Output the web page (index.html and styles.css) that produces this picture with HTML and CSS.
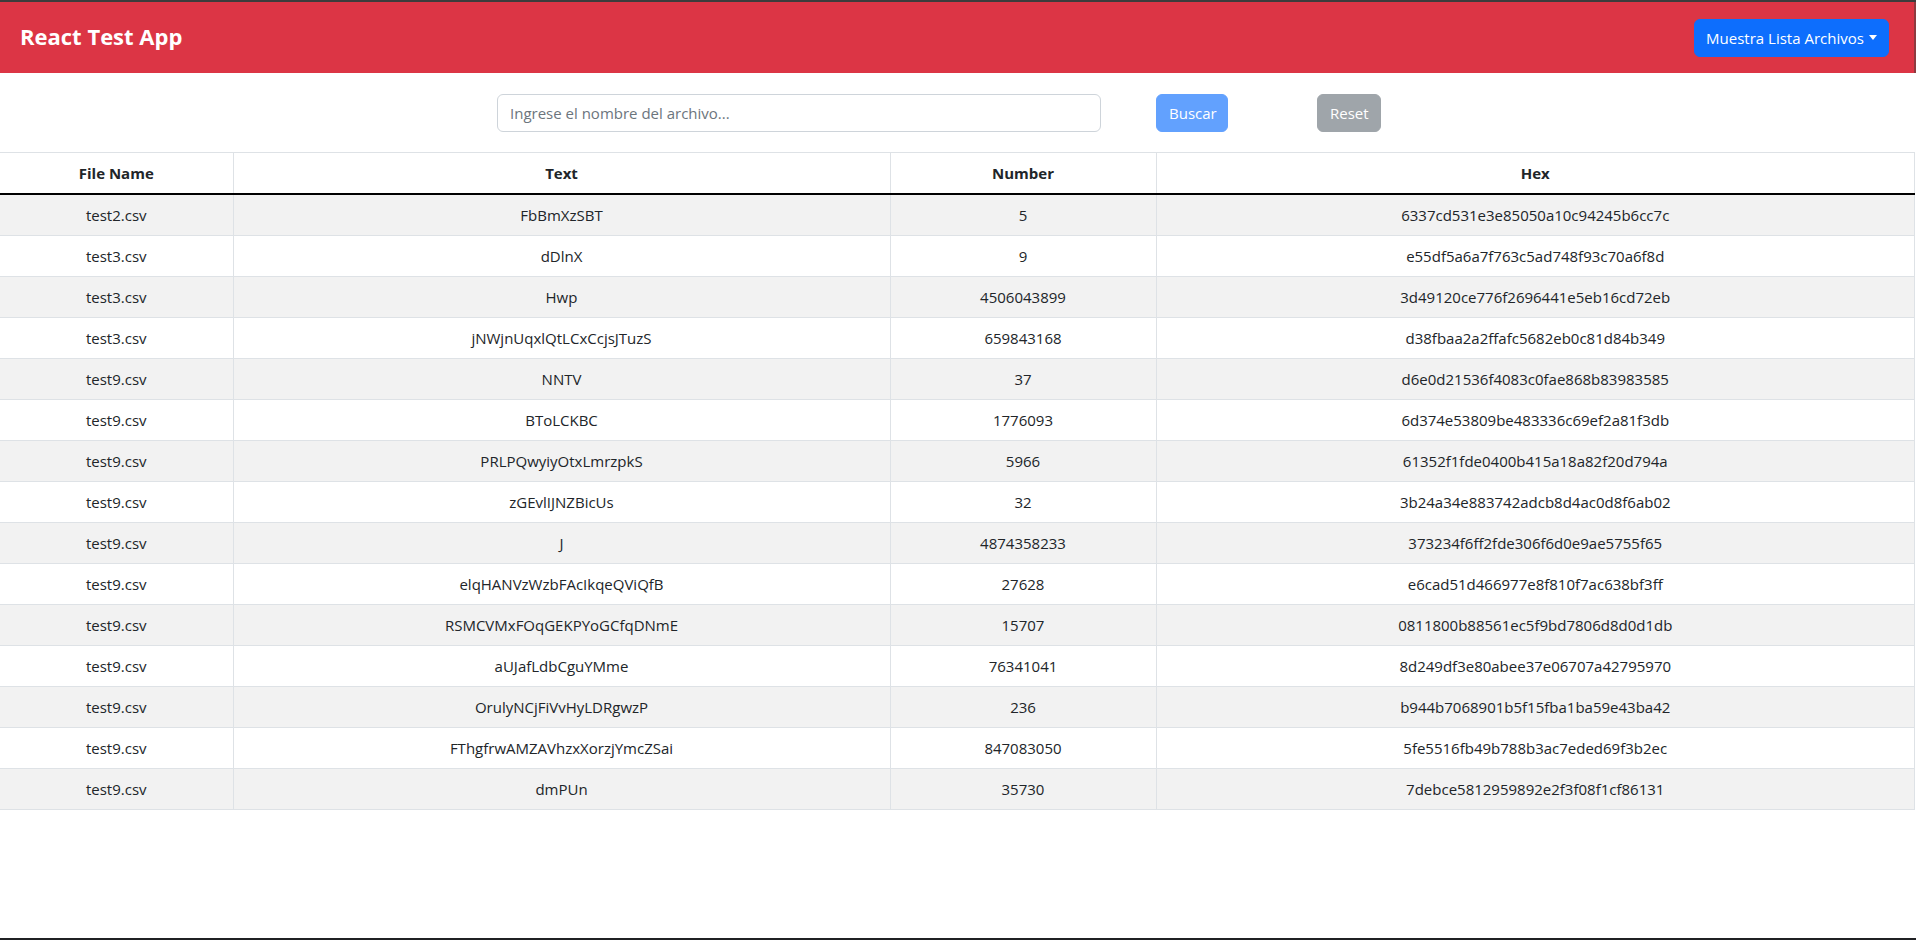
FILE: index.html
```html
<!DOCTYPE html>
<html lang="es">
<head>
<meta charset="utf-8">
<title>React Test App</title>
<link rel="stylesheet" href="styles.css">
</head>
<body>
<div class="window">
  <nav class="navbar">
    <span class="brand">React Test App</span>
    <button class="btn btn-primary dropdown-toggle" type="button">Muestra Lista Archivos</button>
  </nav>
  <div class="search">
    <input class="search-input" type="text" placeholder="Ingrese el nombre del archivo...">
    <button class="btn btn-buscar" type="button" disabled>Buscar</button>
    <button class="btn btn-reset" type="button" disabled>Reset</button>
  </div>
  <table class="files">
    <colgroup>
      <col class="c-file">
      <col class="c-text">
      <col class="c-num">
      <col class="c-hex">
    </colgroup>
    <thead>
      <tr><th>File Name</th><th>Text</th><th>Number</th><th>Hex</th></tr>
    </thead>
    <tbody>
      <tr><td>test2.csv</td><td>FbBmXzSBT</td><td>5</td><td>6337cd531e3e85050a10c94245b6cc7c</td></tr>
      <tr><td>test3.csv</td><td>dDlnX</td><td>9</td><td>e55df5a6a7f763c5ad748f93c70a6f8d</td></tr>
      <tr><td>test3.csv</td><td>Hwp</td><td>4506043899</td><td>3d49120ce776f2696441e5eb16cd72eb</td></tr>
      <tr><td>test3.csv</td><td>jNWjnUqxlQtLCxCcjsJTuzS</td><td>659843168</td><td>d38fbaa2a2ffafc5682eb0c81d84b349</td></tr>
      <tr><td>test9.csv</td><td>NNTV</td><td>37</td><td>d6e0d21536f4083c0fae868b83983585</td></tr>
      <tr><td>test9.csv</td><td>BToLCKBC</td><td>1776093</td><td>6d374e53809be483336c69ef2a81f3db</td></tr>
      <tr><td>test9.csv</td><td>PRLPQwyiyOtxLmrzpkS</td><td>5966</td><td>61352f1fde0400b415a18a82f20d794a</td></tr>
      <tr><td>test9.csv</td><td>zGEvlIJNZBicUs</td><td>32</td><td>3b24a34e883742adcb8d4ac0d8f6ab02</td></tr>
      <tr><td>test9.csv</td><td>J</td><td>4874358233</td><td>373234f6ff2fde306f6d0e9ae5755f65</td></tr>
      <tr><td>test9.csv</td><td>elqHANVzWzbFAcIkqeQViQfB</td><td>27628</td><td>e6cad51d466977e8f810f7ac638bf3ff</td></tr>
      <tr><td>test9.csv</td><td>RSMCVMxFOqGEKPYoGCfqDNmE</td><td>15707</td><td>0811800b88561ec5f9bd7806d8d0d1db</td></tr>
      <tr><td>test9.csv</td><td>aUJafLdbCguYMme</td><td>76341041</td><td>8d249df3e80abee37e06707a42795970</td></tr>
      <tr><td>test9.csv</td><td>OrulyNCjFiVvHyLDRgwzP</td><td>236</td><td>b944b7068901b5f15fba1ba59e43ba42</td></tr>
      <tr><td>test9.csv</td><td>FThgfrwAMZAVhzxXorzjYmcZSai</td><td>847083050</td><td>5fe5516fb49b788b3ac7eded69f3b2ec</td></tr>
      <tr><td>test9.csv</td><td>dmPUn</td><td>35730</td><td>7debce5812959892e2f3f08f1cf86131</td></tr>
    </tbody>
  </table>
  <div class="filler"></div>
</div>
</body>
</html>
```

FILE: styles.css
```css
* { box-sizing: border-box; }

html, body {
  margin: 0;
  padding: 0;
  background: #ffffff;
}

body {
  font-family: "Open Sans", "Noto Sans", sans-serif;
  font-size: 15px;
  line-height: 24px;
  color: #212529;
}

.window {
  height: 940px;
  display: flex;
  flex-direction: column;
  border-top: 2px solid #3c3c3c;
  border-bottom: 2px solid #202124;
  overflow: hidden;
}

.navbar {
  flex: 0 0 71px;
  background: #dc3545;
  display: flex;
  align-items: center;
  justify-content: space-between;
  padding: 0 25px 0 20px;
  border-right: 2px solid #8e3a40;
}

.brand {
  color: #ffffff;
  font-weight: 700;
  font-size: 22px;
  line-height: 30px;
  margin-top: -4px;
}

.btn {
  height: 38px;
  border: 1px solid transparent;
  border-radius: 6px;
  padding: 0 12px;
  font-family: inherit;
  font-size: 15px;
  line-height: 24px;
  color: #ffffff;
  cursor: pointer;
}

.btn-primary {
  background: #0d6efd;
  border-color: #0d6efd;
  width: 195px;
  padding: 0 11px;
  white-space: nowrap;
}

.dropdown-toggle::after {
  content: "";
  display: inline-block;
  margin-left: 5px;
  vertical-align: 4px;
  border-top: 5px solid #ffffff;
  border-left: 4.5px solid transparent;
  border-right: 4.5px solid transparent;
}

.search {
  flex: 0 0 auto;
  display: flex;
  align-items: center;
  padding: 21px 0 20px 497px;
}

.search-input {
  width: 604px;
  height: 38px;
  border: 1px solid #ced4da;
  border-radius: 6px;
  padding: 6px 12px;
  font-family: inherit;
  font-size: 15px;
  color: #212529;
  outline: none;
}

.search-input::placeholder {
  color: #6c757d;
}

.btn-buscar {
  margin-left: 55px;
  width: 72px;
  background: #62a1fe;
  border-color: #62a1fe;
}

.btn-reset {
  margin-left: 89px;
  width: 64px;
  background: #9fa5aa;
  border-color: #9fa5aa;
}

.files {
  width: 1915px;
  border-collapse: collapse;
  table-layout: fixed;
  flex: 0 0 auto;
}

.c-file { width: 233px; }
.c-text { width: 657px; }
.c-num { width: 266px; }
.c-hex { width: auto; }

.files th,
.files td {
  border: 1px solid #dee2e6;
  padding: 8px;
  height: 41px;
  text-align: center;
  vertical-align: middle;
  white-space: nowrap;
}

.files tr > :first-child {
  border-left: 0;
}

.files th {
  font-weight: 700;
  color: #212529;
  border-bottom: 2px solid #000000;
}

.files tbody tr:nth-child(odd) td {
  background: #f2f2f2;
}

.filler {
  flex: 1 1 auto;
}
```
